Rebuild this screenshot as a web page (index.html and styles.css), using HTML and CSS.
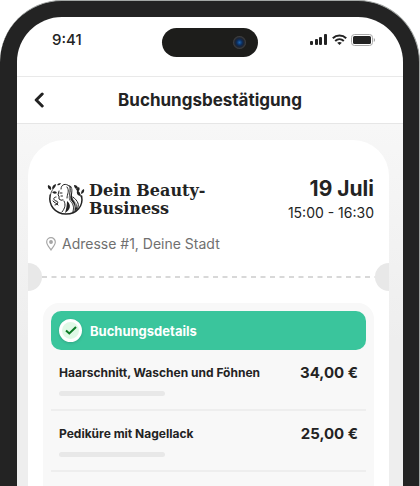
FILE: index.html
```
<!DOCTYPE html>
<html lang="de">
<head>
  <meta charset="UTF-8">
  <meta name="viewport" content="width=device-width, initial-scale=1.0">
  <title>Buchungsbestätigung</title>
  <link rel="stylesheet" href="styles.css">
</head>
<body>
<div class="phone">
  <div class="screen">
    <div class="status-bar">
      <span class="time">9:41</span>
      <div class="island"><span class="camera"></span></div>
      <div class="status-icons">
        <svg width="18" height="12" viewBox="0 0 18 12" fill="#232323">
          <rect x="0" y="7" width="3" height="4" rx="1"/>
          <rect x="5" y="5" width="3" height="6" rx="1"/>
          <rect x="9" y="3" width="3" height="8" rx="1"/>
          <rect x="14" y="0" width="3" height="11" rx="1"/>
        </svg>
        <svg width="15" height="12" viewBox="0 0 15 12" fill="none" stroke="#232323" stroke-width="2">
          <path d="M.8 4.3C4.6.6 10.4.6 14.2 4.3"/>
          <path d="M3.2 7C5.7 4.7 9.3 4.7 11.8 7"/>
          <path d="M7.5 11 5.2 8.8Q7.5 7.1 9.8 8.8Z" fill="#232323" stroke="none"/>
        </svg>
        <svg width="24" height="12" viewBox="0 0 24 12">
          <rect x=".5" y=".5" width="21" height="11" rx="3" fill="none" stroke="#a9a9a9"/>
          <rect x="2" y="2" width="18" height="8" rx="1.5" fill="#232323"/>
          <path d="M22.8 4v4q1.2-.7 1.2-2t-1.2-2Z" fill="#a0a0a0"/>
        </svg>
      </div>
    </div>

    <header class="nav-bar">
      <button type="button" class="back-btn" aria-label="Zurück">
        <svg width="10" height="16" viewBox="0 0 10 16" fill="none" stroke="#232323" stroke-width="3" stroke-linecap="round" stroke-linejoin="round">
          <path d="M8.2 2 2.2 8l6 6"/>
        </svg>
      </button>
      <h1>Buchungsbestätigung</h1>
    </header>

    <main class="content">
      <div class="ticket">
        <div class="ticket-head">
          <div class="business">
            <svg class="logo" width="38" height="36" viewBox="0 0 38 36" fill="none" stroke="#232323" stroke-linecap="round">
              <path d="M3.2 13C1.2 23 8 32 19 32s17.500-8 15.600-18" stroke-width="1.500"/>
              <g fill="#232323" stroke="none">
                <path d="M1 3q4 1 3 5-4-1-3-5ZM5 7q0-4 4-5 0 4-4 5ZM10 3q1-2 4-2-1 3-4 2Z"/>
                <path d="M5 10q4-2 5 1-3 2-5-1ZM27 3q4 0 4 4-4 0-4-4ZM30 10q-1-4 2-5 2 3-2 5ZM34 12q0-4 3-5 1 4-3 5ZM30 9q4 1 3 5-4-1-3-5Z"/>
                <path d="M22 3c5 2 3 7 3 11 0 3 7 8 5 13-1 2-3 3-5 4 2-5 1-9-2-12-3-4 1-8-1-16Z"/>
                <path d="M20 19c5 4 3 9-2 12 1-4 2-7 2-12Z"/>
              </g>
              <path d="M3.500 13C4 10 5 8 7 6M34 15c-.5-3-2.500-6-5-8" stroke-width=".8"/>
              <path d="M14 7C14 2 19 1 22 4M12 9l-1 4 1 1v3q2 2 4 1M13 11h2M14 14h1.500" stroke-width="1"/>
              <path d="M20 5c3 4 0 7 0 11M17 19c2 4 1 7-2 11M9 15c-3 0-3 3 0 4 3 0 2 4-1 4M6 19c1 2 4 2 5 4M26 15c5 4 7 8 4 12" stroke-width="1"/>
              <path d="M24 6c1 5-3 9 0 13 3 3 4 6 3 10M26 17c3 3 3 6 3 8" stroke="#fff" stroke-width=".8"/>
            </svg>
            <h2>Dein Beauty-<br>Business</h2>
          </div>
          <div class="appointment">
            <p class="date">19 Juli</p>
            <p class="hours">15:00 - 16:30</p>
          </div>
        </div>
        <p class="address">
          <svg width="10" height="14" viewBox="0 0 10 14" fill="none" stroke="#a6a6a6" stroke-width="1.200">
            <path d="M5 13C3.500 10.700.7 8 .7 5a4.300 4.300 0 0 1 8.600 0C9.300 8 6.500 10.700 5 13Z"/>
            <circle cx="5" cy="5" r="1.300" fill="#a6a6a6"/>
          </svg>
          Adresse #1, Deine Stadt
        </p>

        <div class="tear-line">
          <svg width="100%" height="2">
            <line x1="0" y1="1" x2="100%" y2="1" stroke="#d8d8d8" stroke-width="2" stroke-dasharray="5 4.500"/>
          </svg>
        </div>

        <section class="details">
          <h3 class="details-title">
            <span class="check">
              <svg width="12" height="9" viewBox="0 0 12 9" fill="none" stroke="#0c7a25" stroke-width="2">
                <path d="M1 4.500 4.300 7.500 11 1"/>
              </svg>
            </span>
            Buchungsdetails
          </h3>
          <ul class="services">
            <li>
              <div class="service">
                <span class="name">Haarschnitt, Waschen und Föhnen</span>
                <span class="price">34,00 €</span>
              </div>
              <div class="placeholder"></div>
            </li>
            <li>
              <div class="service">
                <span class="name">Pediküre mit Nagellack</span>
                <span class="price">25,00 €</span>
              </div>
              <div class="placeholder"></div>
            </li>
          </ul>
        </section>
      </div>
    </main>
  </div>
</div>
</body>
</html>
```
FILE: styles.css
```
* {
  box-sizing: border-box;
}

body {
  margin: 0;
  font-family: Inter, "Liberation Sans", sans-serif;
  color: #232323;
  background: #fff;
}

h1, h2, h3, p, ul {
  margin: 0;
  padding: 0;
}

svg {
  display: block;
  flex: none;
}

/* Phone frame */
.phone {
  display: flex;
  min-height: 100vh;
  padding: 16px 16px 0 17px;
  background: #232323;
  border-top: 1px solid #a3a7a5;
  border-right: 1px solid #a3a7a5;
  border-radius: 62px 62px 0 0;
}

.screen {
  display: flex;
  flex-direction: column;
  flex: 1;
  min-width: 0;
  background: #fff;
  border-radius: 45px 45px 0 0;
  overflow: hidden;
}

/* Status bar */
.status-bar {
  display: grid;
  grid-template-columns: 1fr 96px 1fr;
  align-items: start;
  height: 60px;
  padding: 11px 28px 0;
  border-bottom: 1px solid #e9e9e9;
}

.time {
  padding-left: 7px;
  font-size: 15px;
  line-height: 24px;
  font-weight: 500;
}

.island {
  display: flex;
  align-items: center;
  justify-content: flex-end;
  height: 29px;
  padding-right: 12px;
  background: #1d1d1b;
  border-radius: 15px;
}

.camera {
  width: 13px;
  height: 13px;
  border-radius: 50%;
  background: radial-gradient(circle, #1c65b0 0, #0b2c5c 30%, #1e2430 50%, #454545 70%);
}

.status-icons {
  display: flex;
  align-items: center;
  justify-content: flex-end;
  gap: 4px;
  height: 24px;
}

/* Navigation */
.nav-bar {
  display: grid;
  grid-template-columns: 32px 1fr 32px;
  align-items: center;
  height: 47px;
  padding: 0 11px;
  border-bottom: 1px solid #e6e6e6;
}

.back-btn {
  display: flex;
  padding: 6px;
  background: none;
  border: none;
  cursor: pointer;
}

.nav-bar h1 {
  font-size: 17px;
  line-height: 24px;
  font-weight: 700;
  text-align: center;
}

/* Ticket */
.content {
  display: flex;
  flex: 1;
  padding: 16px 14px 0 11px;
  background: linear-gradient(#f7f7f7, #eee 60%);
}

.ticket {
  display: flex;
  flex-direction: column;
  flex: 1;
  min-width: 0;
  background: #fff;
  border-radius: 36px 36px 0 0;
  overflow: hidden;
}

.ticket-head {
  display: flex;
  justify-content: space-between;
  padding: 36px 15px 0 19px;
}

.business {
  display: flex;
  gap: 4px;
  padding-top: 6px;
}

.business h2 {
  font-family: "DejaVu Serif", serif;
  font-size: 16px;
  line-height: 18px;
  font-weight: 700;
  white-space: nowrap;
}

.appointment {
  text-align: right;
  white-space: nowrap;
}

.date {
  font-size: 21px;
  line-height: 25px;
  font-weight: 700;
}

.hours {
  font-size: 14px;
  line-height: 24px;
}

.address {
  display: flex;
  align-items: center;
  gap: 6px;
  padding: 7px 15px 0 18px;
  font-size: 14px;
  line-height: 24px;
  color: #707070;
}

/* Perforated line with a notch on both sides */
.tear-line {
  display: flex;
  align-items: center;
  height: 28px;
  margin: 7px -14px 0;
}

.tear-line::before,
.tear-line::after {
  content: "";
  flex: none;
  width: 28px;
  height: 28px;
  border-radius: 50%;
  background: #e8e8e8;
}

.tear-line svg {
  flex: 1;
  min-width: 0;
}

/* Booking details */
.details {
  flex: 1;
  margin: 12px 15px 0;
  padding: 8px;
  background: #f8f8f8;
  border-radius: 16px 16px 0 0;
}

.details-title {
  display: flex;
  align-items: center;
  gap: 8px;
  height: 39px;
  padding: 0 8px;
  font-size: 13px;
  font-weight: 700;
  color: #fff;
  background: #3ac59c;
  border-radius: 10px;
}

.check {
  display: flex;
  align-items: center;
  justify-content: center;
  width: 23px;
  height: 23px;
  background: #dff9e6;
  border: 3px solid #fff;
  border-radius: 50%;
  box-shadow: 0 1px 3px rgba(0, 0, 0, 0.15);
}

.services {
  list-style: none;
}

.services li {
  height: 61px;
  padding: 11px 8px 0;
  border-bottom: 2px solid #eee;
}

.service {
  display: flex;
  align-items: center;
  justify-content: space-between;
  line-height: 24px;
}

.name {
  font-size: 12px;
  font-weight: 700;
}

.price {
  font-size: 15px;
  font-weight: 700;
  white-space: nowrap;
}

.placeholder {
  width: 106px;
  height: 5px;
  margin-top: 6px;
  background: #e8e8e8;
  border-radius: 3px;
}
```
